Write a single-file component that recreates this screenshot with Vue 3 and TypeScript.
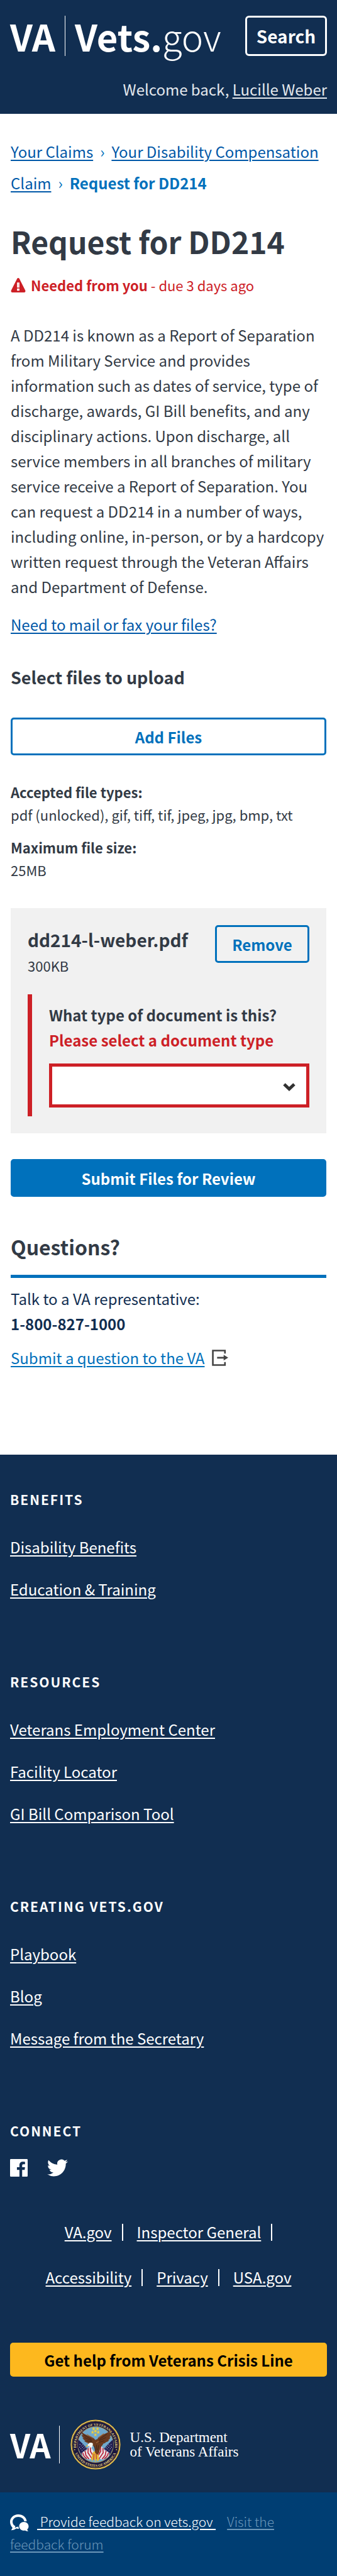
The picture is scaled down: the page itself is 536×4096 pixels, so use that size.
<script setup lang="ts">
import { ref } from 'vue'

interface LinkGroup {
  title: string
  links: string[]
}

const groups: LinkGroup[] = [
  { title: 'BENEFITS', links: ['Disability Benefits', 'Education & Training'] },
  { title: 'RESOURCES', links: ['Veterans Employment Center', 'Facility Locator', 'GI Bill Comparison Tool'] },
  { title: 'CREATING VETS.GOV', links: ['Playbook', 'Blog', 'Message from the Secretary'] },
]

const legalRows: string[][] = [
  ['VA.gov', 'Inspector General'],
  ['Accessibility', 'Privacy', 'USA.gov'],
]

const documentType = ref<string>('')
</script>

<template>
  <div class="page">
    <header class="header">
      <div class="header-top">
        <a class="brand" href="#">
          <span class="brand-va">VA</span>
          <span class="brand-rule"></span>
          <span class="brand-name">Vets.<span class="brand-gov">gov</span></span>
        </a>
        <button class="search" type="button">Search</button>
      </div>
      <p class="welcome">Welcome back, <a href="#">Lucille Weber</a></p>
    </header>

    <main class="main">
      <nav class="crumbs" aria-label="Breadcrumb">
        <a href="#">Your Claims</a><span class="chev">›</span><a href="#">Your Disability Compensation Claim</a><span class="chev">›</span><strong>Request for DD214</strong>
      </nav>

      <h1>Request for DD214</h1>
      <p class="needed">
        <svg class="warn" viewBox="0 0 24 24" aria-hidden="true">
          <path d="M12 0c.8 0 1.400.4 1.800 1.100l9.900 19.500c.8 1.500-.2 3.400-1.900 3.400H2.200C.5 24-.5 22.100.3 20.600L10.200 1.100C10.600.4 11.200 0 12 0z" fill="#cd2026" />
          <path d="M10 7.500h4v8.500h-4zM10 17.500h4v3.500h-4z" fill="#fff" />
          <path d="M11.500 8.500h1v7h-1z" fill="#cd2026" opacity=".35" />
        </svg>
        <span><strong>Needed from you</strong> - due 3 days ago</span>
      </p>

      <p class="intro">
        A DD214 is known as a Report of Separation from Military Service and provides information such as
        dates of service, type of discharge, awards, GI Bill benefits, and any disciplinary actions. Upon
        discharge, all service members in all branches of military service receive a Report of Separation.
        You can request a DD214 in a number of ways, including online, in-person, or by a hardcopy written
        request through the Veteran Affairs and Department of Defense.
      </p>
      <p class="mail"><a href="#">Need to mail or fax your files?</a></p>

      <h2 class="select-title">Select files to upload</h2>
      <button class="btn btn-outline add" type="button">Add Files</button>

      <dl class="limits">
        <dt>Accepted file types:</dt>
        <dd>pdf (unlocked), gif, tiff, tif, jpeg, jpg, bmp, txt</dd>
        <dt>Maximum file size:</dt>
        <dd>25MB</dd>
      </dl>

      <section class="card">
        <div class="card-top">
          <div>
            <h3>dd214-l-weber.pdf</h3>
            <p class="size">300KB</p>
          </div>
          <button class="btn btn-outline remove" type="button">Remove</button>
        </div>
        <div class="field">
          <label for="doc-type">What type of document is this?</label>
          <p class="error" id="doc-error">Please select a document type</p>
          <div class="select-wrap">
            <select id="doc-type" v-model="documentType" aria-describedby="doc-error">
              <option value=""></option>
              <option value="dd214">DD214</option>
            </select>
            <svg class="arrow" viewBox="0 0 22 14" aria-hidden="true">
              <path d="M3 3l8 7.500L19 3" fill="none" stroke="#323232" stroke-width="5" />
            </svg>
          </div>
        </div>
      </section>

      <button class="btn btn-solid" type="button">Submit Files for Review</button>

      <h2 class="questions">Questions?</h2>
      <p class="talk">Talk to a VA representative:<br /><strong>1-800-827-1000</strong></p>
      <p class="ask">
        <a href="#">Submit a question to the VA</a>
        <svg class="exit" viewBox="0 0 25 25" aria-hidden="true">
          <path d="M20 6V1.500H1.500v22H20V19" fill="none" stroke="#444" stroke-width="2.500" />
          <path d="M8 11h10V8l7 4.300-7 4.300v-3H8z" fill="#444" />
        </svg>
      </p>
    </main>

    <footer class="footer">
      <section v-for="group in groups" :key="group.title" class="group">
        <h4>{{ group.title }}</h4>
        <ul>
          <li v-for="link in group.links" :key="link"><a href="#">{{ link }}</a></li>
        </ul>
      </section>

      <section class="connect">
        <h4>CONNECT</h4>
        <div class="social">
          <a href="#" aria-label="Facebook">
            <svg width="28" height="28" viewBox="0 0 32 32">
              <path d="M1.500 0h29A1.500 1.500 0 0 1 32 1.500v29a1.500 1.500 0 0 1-1.500 1.500H22V19.700h4.500l.7-4.900H22v-3c0-1.500.5-2.400 2.500-2.400h2.700V5c-.5 0-2-.2-3.900-.2-3.900 0-6.300 2.300-6.300 6.500v3.500h-4.500v4.900H17V32H1.500A1.500 1.500 0 0 1 0 30.500v-29A1.500 1.500 0 0 1 1.500 0z" fill="#fff" />
            </svg>
          </a>
          <a href="#" aria-label="Twitter">
            <svg width="33" height="28" viewBox="0 2 24 20">
              <path d="M23.950 4.570a10 10 0 0 1-2.820.77 4.960 4.960 0 0 0 2.160-2.720c-.95.550-2 .950-3.120 1.180a4.920 4.920 0 0 0-8.380 4.480C7.690 8.090 4.070 6.130 1.640 3.160a4.820 4.820 0 0 0-.67 2.480c0 1.710.87 3.210 2.190 4.100a4.900 4.900 0 0 1-2.230-.62v.06a4.920 4.920 0 0 0 3.950 4.830 5 5 0 0 1-2.210.08 4.940 4.940 0 0 0 4.600 3.420A9.870 9.870 0 0 1 0 19.540a13.990 13.990 0 0 0 7.560 2.210c9.050 0 14-7.500 14-13.980 0-.21 0-.42-.02-.63a9.940 9.940 0 0 0 2.460-2.550z" fill="#fff" />
            </svg>
          </a>
        </div>
      </section>

      <nav class="legal" aria-label="Related sites">
        <ul v-for="(row, i) in legalRows" :key="i">
          <li v-for="item in row" :key="item" :class="{ last: item === 'USA.gov' }"><a href="#">{{ item }}</a></li>
        </ul>
      </nav>

      <button class="crisis" type="button">Get help from Veterans Crisis Line</button>

      <div class="dept">
        <span class="dept-va">VA</span>
        <span class="dept-rule"></span>
        <svg class="seal" viewBox="15 18 284 284" role="img" aria-label="Seal of the Department of Veterans Affairs">
          <defs>
            <path id="arc-top" d="M50.800 193A110 110 0 1 1 263.200 193" />
            <path id="arc-bottom" d="M34.600 186A125 125 0 0 0 279.400 186" />
            <clipPath id="disc"><circle cx="157" cy="160" r="101" /></clipPath>
          </defs>
          <circle cx="157" cy="160" r="141" fill="#1a1740" />
          <circle cx="157" cy="160" r="137" fill="none" stroke="#e3c04d" stroke-width="7" />
          <circle cx="157" cy="160" r="131" fill="none" stroke="#7b6321" stroke-width="2" />
          <circle cx="157" cy="160" r="101" fill="#6fa8cd" stroke="#b6a04d" stroke-width="3" />
          <g clip-path="url(#disc)">
            <path d="M56 128l34 34 32 36 6 36-30 2-26-26-18-40z" fill="#211f52" />
            <path d="M258 128l-34 34-32 36-6 36 30 2 26-26 18-40z" fill="#211f52" />
            <g stroke="#e8e8f4" stroke-width="4" stroke-dasharray="3 8">
              <path d="M68 158l40 48M66 174l36 44M82 160l34 40M246 158l-40 48M248 174l-36 44M232 160l-34 40" />
            </g>
            <path d="M78 208l28-18 20-22 20 30 6 40-34 6-32-14z" fill="#e9e3e6" />
            <path d="M236 208l-28-18-20-22-20 30-6 40 34 6 32-14z" fill="#e9e3e6" />
            <g fill="none" stroke="#b7263c" stroke-width="6">
              <path d="M116 180l-2 26 24 36M128 170l0 28 20 34M98 196l4 24 18 22M84 206l8 20 16 14" />
              <path d="M198 180l2 26-24 36M186 170l0 28-20 34M216 196l-4 24-18 22M230 206l-8 20-16 14" />
            </g>
            <path d="M140 206l16-12 16 12 6 42-12 8-4-18-6 22-8-22-10 16-6-10z" fill="#e6b735" />
            <path d="M148 212l-2 34M160 208l2 34" stroke="#b7263c" stroke-width="4" />
          </g>
          <path d="M155 134c-8-16-28-20-42-25-15-6-29-14-37-23 2 12 8 18 10 22-3 0-7-3-9-5 2 10 8 16 13 19-3 1-5 0-8-2 4 9 11 15 17 17-2 2-4 2-7 1 8 9 18 13 24 13l-4 5c8 4 14 3 18 2l-4 10 18-2 8 14 2 26 14 12 10-14 6-28 10-10 8-12c8 0 12-5 14-8 8-1 14-6 17-10l-5-1c8-5 12-12 14-18l-7 3c7-8 10-15 11-21l-8 4c5-8 7-15 6-24-9 9-24 15-39 22-16 7-32 12-37 28l-8 3z" fill="#69391f" />
          <g fill="none" stroke="#3b2015" stroke-width="3">
            <path d="M88 104l46 28M96 121l40 18M106 138l32 8M222 100l-44 32M216 120l-38 18M206 138l-30 10" />
            <path d="M150 170l6 24M162 162l2 30M174 164l-4 28" />
          </g>
          <path d="M108 102l36 22M204 98l-30 22M160 150l14-8" stroke="#a26b3b" stroke-width="4" fill="none" />
          <path d="M142 154c-8-8-22-6-26 2-4 5-4 10-8 16 6-5 10-3 15-3l7 11c8-4 13-15 12-26z" fill="#f5f4ef" />
          <path d="M115 163l-10 2-2 10 9-6z" fill="#e5ae2b" />
          <g fill="#f2cf3c">
            <path d="M156 74l3 7 7 0-6 5 3 8-7-5-7 5 3-8-6-5 7 0z" />
            <path d="M146 61l3 7 7 0-6 5 3 8-7-5-7 5 3-8-6-5 7 0z" />
            <path d="M168 61l3 7 7 0-6 5 3 8-7-5-7 5 3-8-6-5 7 0z" />
            <path d="M140 80l3 7 7 0-6 5 3 8-7-5-7 5 3-8-6-5 7 0z" />
            <path d="M172 80l3 7 7 0-6 5 3 8-7-5-7 5 3-8-6-5 7 0z" />
            <path d="M156 94l3 7 7 0-6 5 3 8-7-5-7 5 3-8-6-5 7 0z" />
          </g>
          <text class="seal-text"><textPath href="#arc-top" startOffset="50%">DEPARTMENT OF VETERANS AFFAIRS</textPath></text>
          <text class="seal-text"><textPath href="#arc-bottom" startOffset="50%">UNITED STATES OF AMERICA</textPath></text>
          <circle cx="39" cy="189" r="3" fill="#e3c04d" />
          <circle cx="275" cy="189" r="3" fill="#e3c04d" />
        </svg>
        <p class="dept-name">U.S. Department<br />of Veterans Affairs</p>
      </div>
    </footer>

    <div class="feedback">
      <svg class="bubbles" viewBox="0 0 30 27" aria-hidden="true">
        <path d="M13 0C20 0 26 4.600 26.500 11h-4C22 7 18 4 13 4S4 7.500 4 12c0 3 1.700 5.200 4.500 6.800L7.500 21.500 11 19.800l2.500 0C13.500 21.500 14 23 14 23c-2 0-3 0-4.300-.4C8 24 5 25.300 1.500 25.300c1.300-1.300 2-2.500 2.300-4.300C1.500 19 0 15.500 0 12 0 5.400 5.800 0 13 0z" fill="#fff" />
        <path d="M22 12c4.200 0 7.500 3 7.500 7 0 2-.8 3.800-2.300 5 .2 1.200 1 2 2 2.800-2.200.2-4-.3-5.300-1.200-5 1-9.400-2.300-9.400-6.600 0-4 3.300-7 7.500-7z" fill="#fff" />
      </svg>
      <a class="feedback-main" href="#">&nbsp;Provide feedback on vets.gov&nbsp;</a>
      <a class="feedback-forum" href="#">Visit the feedback forum</a>
    </div>
  </div>
</template>

<style>
body {
  margin: 0;
  background: #fff;
}
</style>

<style scoped>
.page {
  font-family: "Noto Sans CJK SC", "Noto Sans", sans-serif;
  font-size: 24px;
  line-height: 40px;
  color: #323a45;
}
h1, h2, h3, h4, p, ul, dl, dd {
  margin: 0;
  padding: 0;
}
ul {
  list-style: none;
}
a {
  color: inherit;
  text-decoration: underline;
  text-decoration-thickness: 2px;
  text-underline-offset: 3px;
}
button {
  font-family: inherit;
  font-size: 24px;
  font-weight: 700;
  cursor: pointer;
  padding: 0;
}

.header {
  background: #112e51;
  padding: 25px 16px 19px;
}
.header-top {
  display: flex;
  justify-content: space-between;
  align-items: center;
}
.brand {
  display: flex;
  align-items: center;
  color: #fff;
  text-decoration: none;
  font-size: 58px;
  line-height: 64px;
  font-weight: 700;
}
.brand-rule {
  width: 1px;
  height: 64px;
  margin: 0 15px;
  background: #fff;
}
.brand-gov {
  font-weight: 300;
}
.search {
  width: 130px;
  height: 64px;
  border: 3px solid #fff;
  border-radius: 6px;
  background: transparent;
  color: #fff;
  font-size: 28px;
}
.welcome {
  margin-top: 33px;
  text-align: right;
  color: #e4e8ed;
}

.main {
  padding: 35px 17px 134px;
}
.crumbs {
  line-height: 50px;
  color: #0071bc;
}
.crumbs a {
  color: #0058a8;
}
.chev {
  margin: 0 11px;
}
h1 {
  margin-top: 37px;
  font-size: 48px;
  line-height: 60px;
}
.needed {
  display: flex;
  align-items: center;
  gap: 8px;
  margin-top: 22px;
  font-size: 22px;
  line-height: 36px;
  color: #cd2026;
}
.warn {
  width: 24px;
  height: 23px;
}
.intro {
  margin-top: 42px;
}
.mail {
  margin-top: 20px;
  color: #0058a8;
}
.select-title {
  margin-top: 44px;
  font-size: 27px;
  line-height: 40px;
}
.btn {
  display: block;
  width: 100%;
  height: 60px;
  border: 3px solid #0071bc;
  border-radius: 5px;
}
.btn-outline {
  background: transparent;
  color: #0071bc;
}
.btn-solid {
  margin-top: 41px;
  background: #0071bc;
  color: #fff;
}
.add {
  margin-top: 44px;
}
.limits {
  margin-top: 40px;
  font-size: 22px;
  line-height: 36px;
}
.limits dt {
  font-weight: 700;
}
.limits dd + dt {
  margin-top: 16px;
}
.card {
  margin-top: 43px;
  padding: 27px;
  background: #f1f1f1;
}
.card-top {
  display: flex;
  justify-content: space-between;
  align-items: flex-start;
}
h3 {
  font-size: 28px;
  line-height: 46px;
}
.size {
  font-size: 22px;
  line-height: 36px;
}
.remove {
  width: 150px;
}
.field {
  margin-top: 28px;
  padding: 13px 0 14px 27px;
  border-left: 7px solid #cd2026;
  font-weight: 700;
}
.field label {
  display: block;
}
.error {
  color: #cd2026;
}
.select-wrap {
  position: relative;
  margin-top: 17px;
}
.select-wrap select {
  display: block;
  width: 100%;
  height: 70px;
  padding: 0 50px 0 14px;
  border: 5px solid #cd2026;
  border-radius: 0;
  background: #fff;
  appearance: none;
  font: inherit;
  color: inherit;
}
.arrow {
  position: absolute;
  right: 21px;
  top: 30px;
  width: 22px;
  height: 14px;
  pointer-events: none;
}
.questions {
  margin-top: 54px;
  padding-bottom: 20px;
  border-bottom: 5px solid #0071bc;
  font-size: 32px;
  line-height: 50px;
}
.talk {
  margin-top: 13px;
  color: #112e51;
}
.ask {
  display: flex;
  align-items: center;
  gap: 12px;
  margin-top: 14px;
  color: #0071bc;
}
.exit {
  width: 26px;
  height: 26px;
}

.footer {
  padding: 55px 16px 36px;
  background: #112e51;
  color: #fff;
}
.group {
  margin-bottom: 111px;
}
h4 {
  font-size: 21px;
  line-height: 32px;
  letter-spacing: 2px;
}
.group ul {
  display: grid;
  gap: 27px;
  margin-top: 40px;
}
.social {
  display: flex;
  gap: 31px;
  margin-top: 29px;
}
.social a {
  height: 28px;
}
.social svg {
  display: block;
}
.legal {
  display: grid;
  gap: 32px;
  margin-top: 68px;
}
.legal ul {
  display: flex;
  justify-content: center;
  gap: 22px;
}
.legal li {
  display: flex;
  align-items: center;
}
.legal li::after {
  content: "";
  width: 2px;
  height: 27px;
  margin-left: 16px;
  background: #fff;
}
.legal li.last::after {
  display: none;
}
.crisis {
  display: block;
  width: 100%;
  height: 54px;
  margin-top: 84px;
  border: 0;
  border-radius: 5px;
  background: #fdb81e;
  color: #000;
}
.dept {
  display: flex;
  align-items: center;
  margin-top: 68px;
}
.dept-va {
  font-size: 52px;
  line-height: 60px;
  font-weight: 700;
}
.dept-rule {
  width: 1px;
  height: 60px;
  margin: 0 17px 0 13px;
  background: #fff;
}
.seal {
  width: 80px;
  height: 80px;
}
.seal-text {
  font-family: "Liberation Serif", serif;
  font-size: 20px;
  font-weight: 700;
  fill: #e8d27a;
  text-anchor: middle;
}
.dept-name {
  margin-left: 15px;
  font-family: "Liberation Serif", serif;
  font-size: 23px;
  line-height: 23px;
}

.feedback {
  padding: 28px 16px 33px;
  background: #003e73;
  color: #fff;
  font-size: 21px;
  line-height: 36px;
  font-weight: 300;
}
.bubbles {
  width: 30px;
  height: 27px;
  margin-right: 13px;
  vertical-align: -7px;
}
.feedback-main {
  margin-right: 18px;
}
.feedback-forum {
  color: #6b96b9;
}
</style>
